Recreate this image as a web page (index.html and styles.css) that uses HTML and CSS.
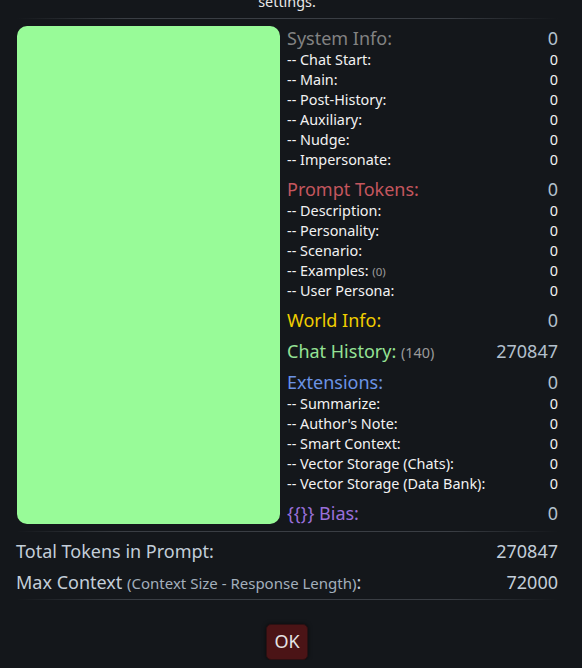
FILE: index.html
```html
<!DOCTYPE html>
<html lang="en">
<head>
    <meta charset="UTF-8">
    <meta name="viewport" content="width=device-width, initial-scale=1.0">
    <title>Prompt Itemization</title>
    <link rel="stylesheet" href="styles.css">
</head>
<body>
    <div class="popup">
        <p class="intro">settings.</p>
        <hr class="sep">
        <div class="itemization">
            <div class="chart"></div>
            <div class="breakdown">
                <div class="section">
                    <div class="head sys"><span>System Info:</span><span class="num">0</span></div>
                    <div class="sub"><span>-- Chat Start:</span><span>0</span></div>
                    <div class="sub"><span>-- Main:</span><span>0</span></div>
                    <div class="sub"><span>-- Post-History:</span><span>0</span></div>
                    <div class="sub"><span>-- Auxiliary:</span><span>0</span></div>
                    <div class="sub"><span>-- Nudge:</span><span>0</span></div>
                    <div class="sub"><span>-- Impersonate:</span><span>0</span></div>
                </div>
                <div class="section">
                    <div class="head prompt"><span>Prompt Tokens:</span><span class="num">0</span></div>
                    <div class="sub"><span>-- Description:</span><span>0</span></div>
                    <div class="sub"><span>-- Personality:</span><span>0</span></div>
                    <div class="sub"><span>-- Scenario:</span><span>0</span></div>
                    <div class="sub"><span>-- Examples: <small>(0)</small></span><span>0</span></div>
                    <div class="sub"><span>-- User Persona:</span><span>0</span></div>
                </div>
                <div class="section">
                    <div class="head world"><span>World Info:</span><span class="num">0</span></div>
                </div>
                <div class="section">
                    <div class="head chat"><span>Chat History: <small>(140)</small></span><span class="num">270847</span></div>
                </div>
                <div class="section">
                    <div class="head ext"><span>Extensions:</span><span class="num">0</span></div>
                    <div class="sub"><span>-- Summarize:</span><span>0</span></div>
                    <div class="sub"><span>-- Author's Note:</span><span>0</span></div>
                    <div class="sub"><span>-- Smart Context:</span><span>0</span></div>
                    <div class="sub"><span>-- Vector Storage (Chats):</span><span>0</span></div>
                    <div class="sub"><span>-- Vector Storage (Data Bank):</span><span>0</span></div>
                </div>
                <div class="section">
                    <div class="head bias"><span>{{}} Bias:</span><span class="num">0</span></div>
                </div>
            </div>
        </div>
        <hr class="sep gap">
        <div class="totals">
            <div class="total"><span>Total Tokens in Prompt:</span><span>270847</span></div>
            <div class="total"><span>Max Context <small>(Context Size - Response Length)</small>:</span><span>72000</span></div>
        </div>
        <hr class="sep">
        <div class="buttons">
            <button class="ok">OK</button>
        </div>
    </div>
</body>
</html>
```

FILE: styles.css
```css
body {
    margin: 0;
    background-color: #14171b;
    color: #dcdcd2;
    font-family: "Noto Sans", sans-serif;
}
.popup {
    padding: 0 24px 0 16px;
}
.intro {
    margin: -8px 0 0;
    text-align: center;
    font-size: 14.4px;
    line-height: 20px;
    color: #e8e8e8;
}
.sep {
    border: 0;
    height: 1px;
    margin: 0;
    background: linear-gradient(90deg, transparent, #3a3e44 20%, #3a3e44 80%, transparent);
}
.popup > .sep:first-of-type {
    margin-top: 6px;
}
.sep.gap {
    margin-top: 6px;
}
.itemization {
    display: flex;
    gap: 7px;
    margin-top: 7px;
}
.chart {
    width: 263px;
    margin-left: 1px;
    height: 498px;
    background-color: #98fb98;
    border-radius: 10px;
}
.breakdown {
    flex: 1;
    display: flex;
    flex-direction: column;
    gap: 7px;
}
.head, .sub, .total {
    display: flex;
    justify-content: space-between;
}
.head {
    font-size: 18px;
    line-height: 24px;
}
.head .num {
    color: #b3c0cd;
}
.sub {
    font-size: 14.4px;
    line-height: 20px;
    color: #f2f2f2;
}
small {
    font-size: 0.8em;
    line-height: 1;
    color: #9a9a9a;
}
.sys { color: #828282; }
.prompt { color: #c4565e; }
.world { color: #f0ce00; }
.chat { color: #95e295; }
.ext { color: #6b93e4; }
.bias { color: #9a70da; }
.totals {
    margin: 5px 0 3px;
    display: flex;
    flex-direction: column;
    gap: 3px;
}
.total {
    font-size: 18px;
    line-height: 28px;
    color: #c3ced9;
}
.total small {
    font-size: 15px;
    color: #a3afbb;
}
.buttons {
    text-align: center;
    padding-top: 24px;
}
.ok {
    background-color: #4b1416;
    color: #e4e4e4;
    border: 1px solid #2c1012;
    border-radius: 5px;
    font-family: "Noto Sans", sans-serif;
    font-size: 18px;
    padding: 4px 7px 6px;
    box-shadow: 0 0 4px rgba(0, 0, 0, 0.6);
}
```
